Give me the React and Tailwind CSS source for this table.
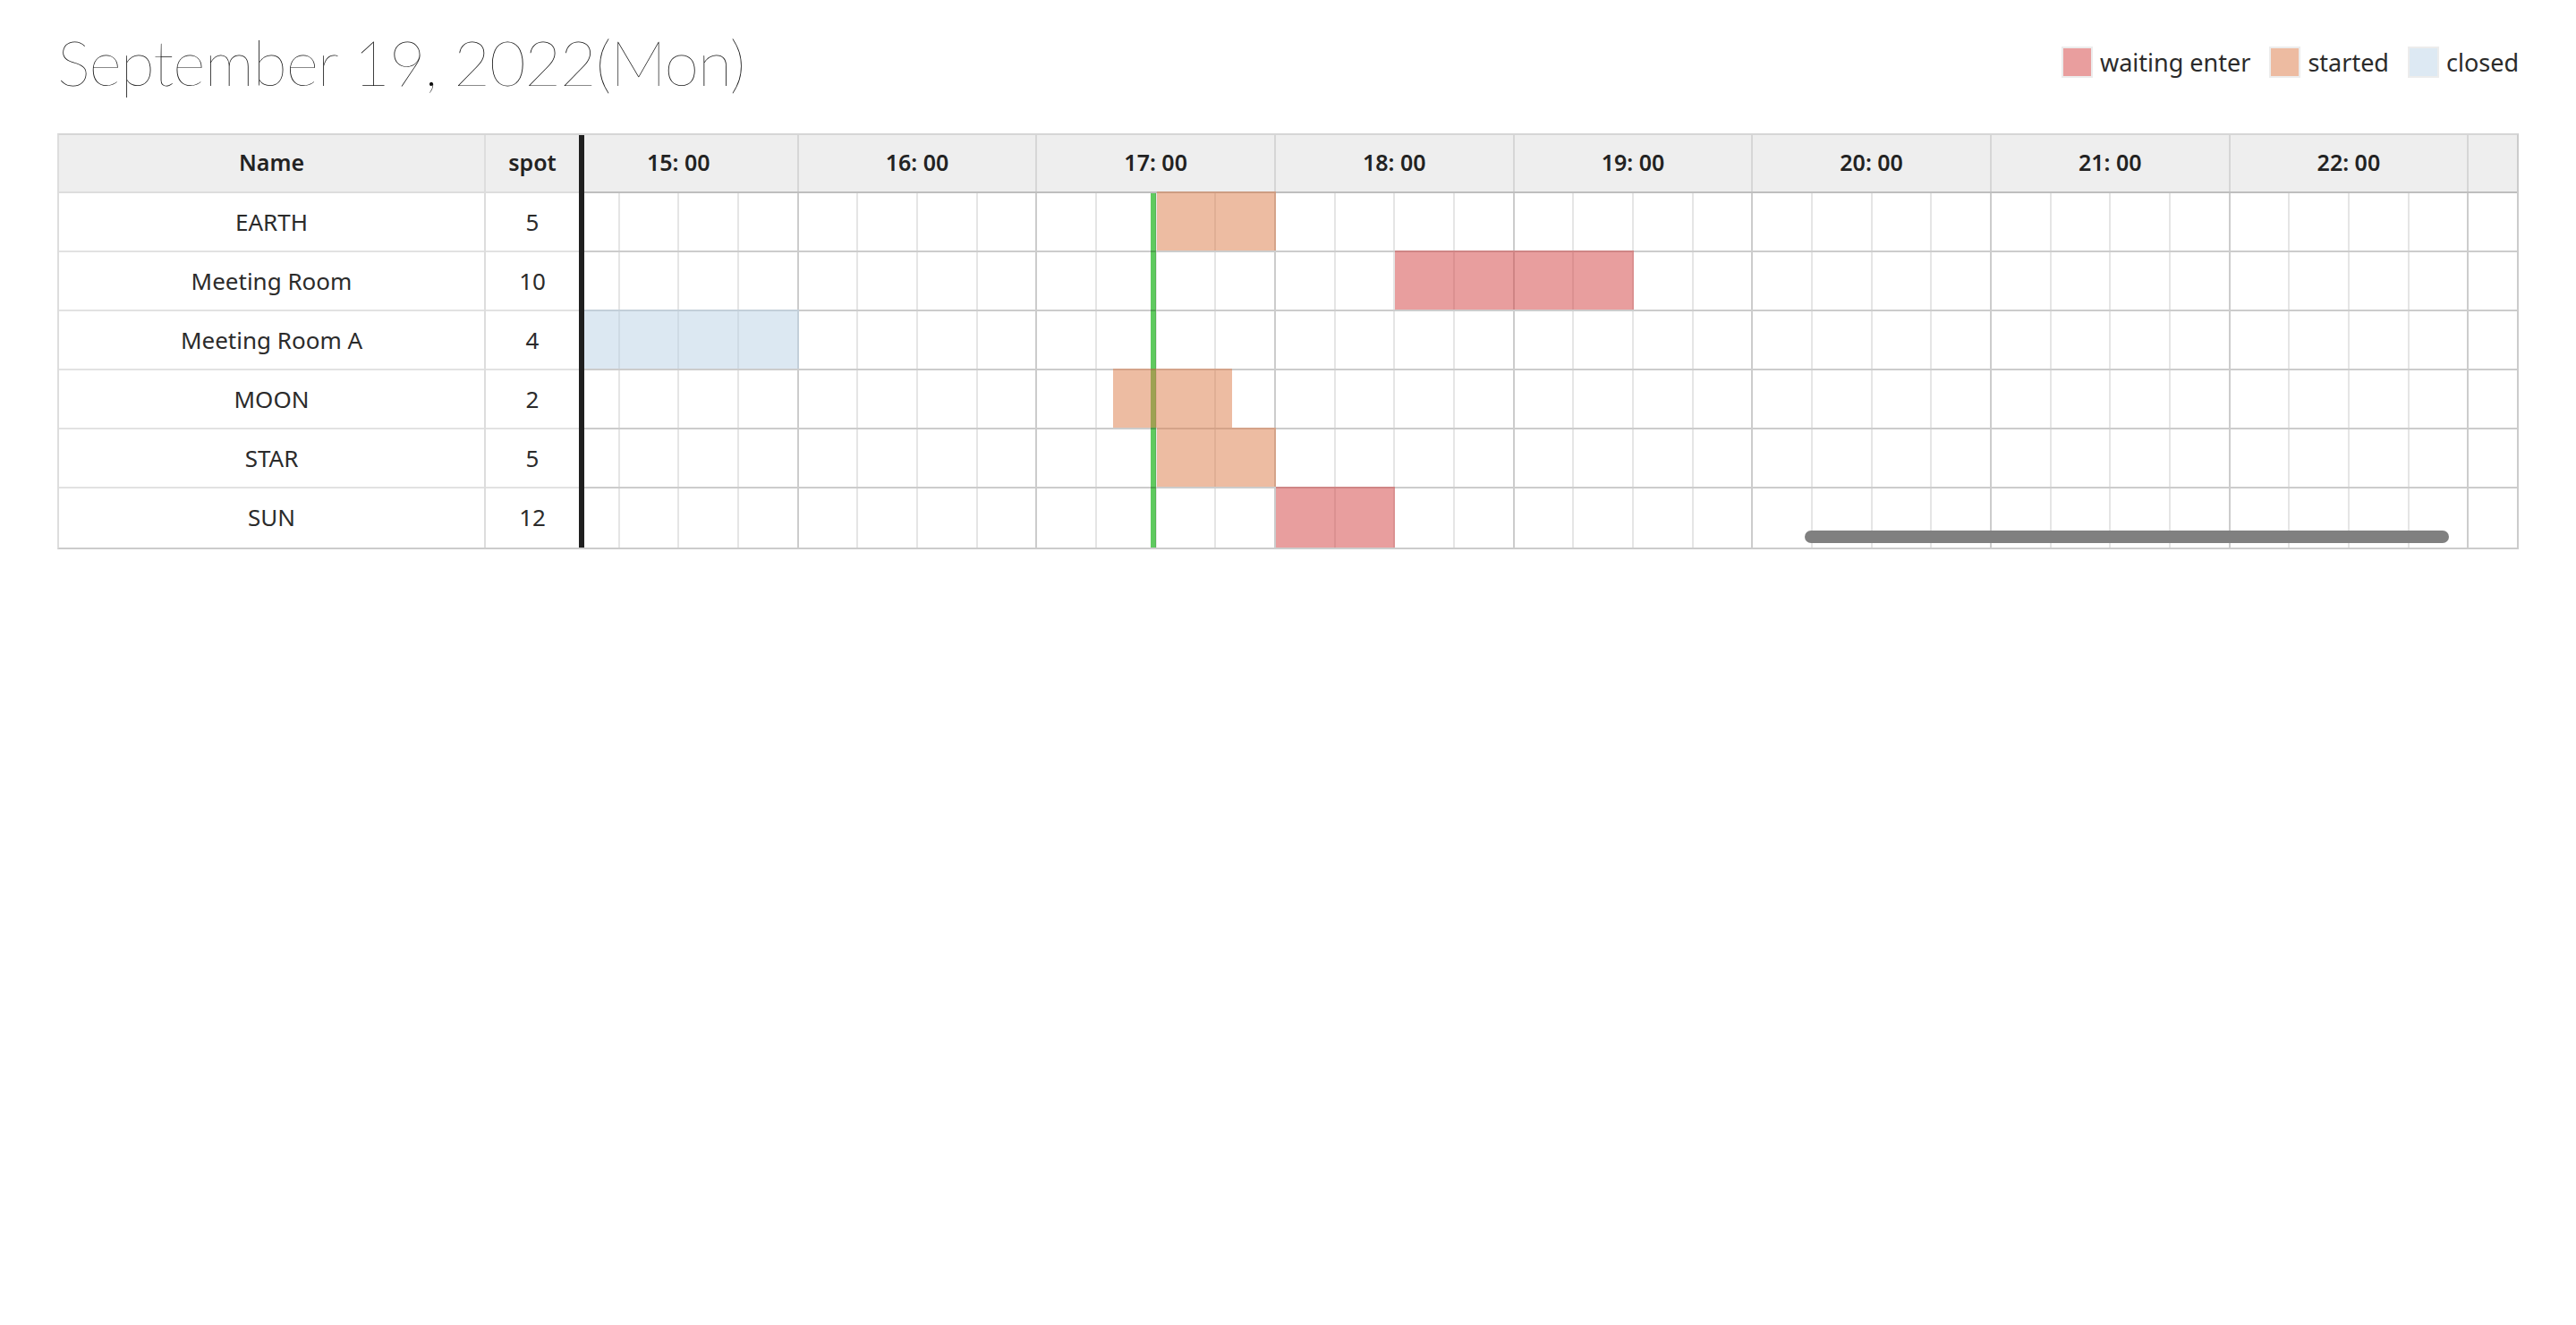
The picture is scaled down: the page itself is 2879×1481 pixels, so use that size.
import React from "react";

const HOUR_W = 266.67;
const START_HOUR = 15;
const HOURS = [15, 16, 17, 18, 19, 20, 21, 22, 23];
const NOW = "17:29";

const rooms = [
  { name: "EARTH", spot: 5, events: [{ from: "17:30", to: "18:00", status: "started" }] },
  { name: "Meeting Room", spot: 10, events: [{ from: "18:30", to: "19:30", status: "waiting" }] },
  { name: "Meeting Room A", spot: 4, events: [{ from: "14:00", to: "16:00", status: "closed" }] },
  { name: "MOON", spot: 2, events: [{ from: "17:19", to: "17:49", status: "started" }] },
  { name: "STAR", spot: 5, events: [{ from: "17:30", to: "18:00", status: "started" }] },
  { name: "SUN", spot: 12, events: [{ from: "18:00", to: "18:30", status: "waiting" }] },
];

const statusClass = {
  waiting: "bg-[rgba(209,61,61,0.5)]",
  started: "bg-[rgba(219,121,69,0.5)]",
  closed: "bg-[rgba(185,209,229,0.5)]",
};

function toX(time) {
  const [h, m] = time.split(":").map(Number);
  return ((h - START_HOUR) * 60 + m) / 60 * HOUR_W;
}

function Legend() {
  const items = [
    { label: "waiting enter", color: "bg-[#e99e9e]" },
    { label: "started", color: "bg-[#edbba1]" },
    { label: "closed", color: "bg-[#dde9f3]" },
  ];
  return (
    <div className="flex items-center gap-[21px]">
      {items.map((it) => (
        <div key={it.label} className="flex items-center gap-[8px]">
          <span className={`h-[35px] w-[35px] border-2 border-[#ececec] ${it.color}`} />
          <span className="text-[27px] leading-none text-[#2b2b2b]">{it.label}</span>
        </div>
      ))}
    </div>
  );
}

function HourCells() {
  return (
    <div className="flex h-full">
      {HOURS.map((h) => (
        <div key={h} className="flex h-full w-[266.67px] shrink-0 border-r-2 border-black/20">
          <div className="h-full flex-1 border-r-2 border-black/10" />
          <div className="h-full flex-1 border-r-2 border-black/10" />
          <div className="h-full flex-1 border-r-2 border-black/10" />
          <div className="h-full flex-1" />
        </div>
      ))}
    </div>
  );
}

export default function App() {
  const nowX = toX(NOW);
  return (
    <div className="min-h-screen bg-white px-[64px] font-['Noto_Sans',sans-serif] text-[#2b2b2b]">
      <header className="flex h-[138px] items-center justify-between">
        <h1 className="font-['Lato',sans-serif] text-[70px] font-thin leading-none tracking-[-1px] text-[#111]">
          September 19, 2022(Mon)
        </h1>
        <Legend />
      </header>

      <div className="relative mt-[11px] flex border-y-2 border-r-2 border-l-2 border-t-[#d6d6d6] border-b-[#cccccc] border-l-[#dddddd] border-r-[#cccccc]">
        {/* fixed columns */}
        <div className="flex shrink-0 border-r-[6px] border-[#1f1f1f]">
          <div className="w-[475px]">
            <div className="flex h-[65px] items-center justify-center border-b-2 border-[#dddddd] bg-[#eeeeee] pb-[2px] text-[25px] font-semibold text-[#222]">
              Name
            </div>
            {rooms.map((r) => (
              <div key={r.name} className="flex h-[66px] items-center justify-center border-b-2 border-[#e2e2e2] text-[26px] last:border-b-0 last:h-[64px]">
                {r.name}
              </div>
            ))}
          </div>
          <div className="w-[106px] border-l-2 border-[#dddddd]">
            <div className="flex h-[65px] items-center justify-center border-b-2 border-[#dddddd] bg-[#eeeeee] pb-[2px] text-[25px] font-semibold text-[#222]">
              spot
            </div>
            {rooms.map((r) => (
              <div key={r.name} className="flex h-[66px] items-center justify-center border-b-2 border-[#e2e2e2] text-[26px] last:border-b-0 last:h-[64px]">
                {r.spot}
              </div>
            ))}
          </div>
        </div>

        {/* timeline */}
        <div className="min-w-0 flex-1 overflow-hidden">
          <div className="ml-[-27px] w-max">
            <div className="flex h-[65px] border-b-2 border-black/20 bg-[#eeeeee]">
              {HOURS.map((h) => (
                <div key={h} className="flex w-[266.67px] shrink-0 items-center justify-center border-r-2 border-[#d6d6d6] pb-[2px] text-[25px] font-semibold text-[#222]">
                  {h < 23 ? `${h}: 00` : ""}
                </div>
              ))}
            </div>
            <div className="relative">
              <div className="absolute top-0 bottom-0 w-[6px] bg-[#5fca5f]" style={{ left: nowX - 2 }} />
              {rooms.map((r, i) => (
                <div key={r.name} className={`relative h-[66px] ${i < rooms.length - 1 ? "border-b-2 border-black/20" : "h-[64px]"}`}>
                  <HourCells />
                  {r.events.map((e, k) => (
                    <div
                      key={k}
                      className={`absolute top-[-2px] bottom-0 ${statusClass[e.status]}`}
                      style={{ left: toX(e.from), width: toX(e.to) - toX(e.from) }}
                    />
                  ))}
                </div>
              ))}
            </div>
          </div>
        </div>

        <div className="absolute bottom-[5px] left-[1951px] h-[14px] w-[720px] rounded-full bg-[#808080]" />
      </div>
    </div>
  );
}
